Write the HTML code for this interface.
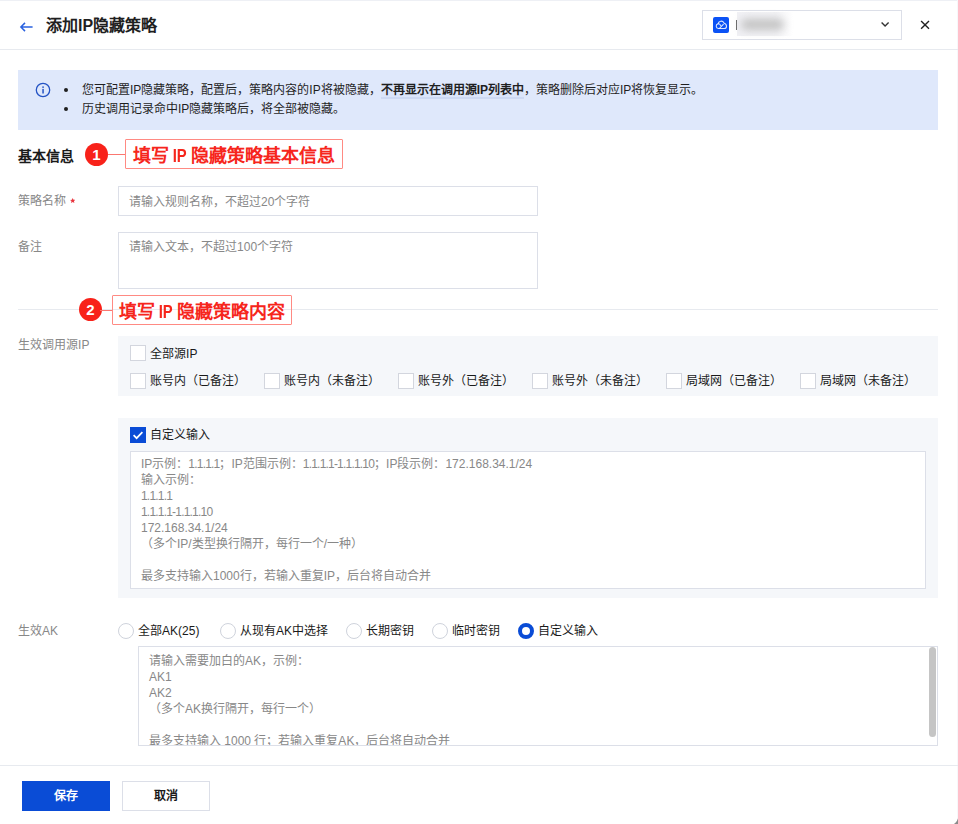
<!DOCTYPE html>
<html lang="zh-CN">
<head>
<meta charset="utf-8">
<title>添加IP隐藏策略</title>
<style>
*{box-sizing:border-box;margin:0;padding:0}
html,body{width:958px;height:824px;overflow:hidden;background:#fff}
body{font-family:"Liberation Sans",sans-serif;font-size:12px;line-height:16px;color:#1a1a1a;position:relative}
.abs{position:absolute;white-space:nowrap}
.j{white-space:nowrap;text-align:justify;text-align-last:justify}
.ln{display:block;height:16px}
.topline{left:0;top:0;width:958px;height:1px;background:#eef0f5}
.rightline{left:957px;top:0;width:1px;height:824px;background:#f7f7fa}
.hline{height:1px;background:#e7eaef}
.title{left:46px;top:14px;font-size:16px;line-height:24px;font-weight:bold;color:#1f1f1f}
.select{left:702px;top:10px;width:200px;height:30px;border:1px solid #dcdfe8;background:#fff}
.info{left:18px;top:70px;width:920px;height:60px;background:#dfe8fb}
.info .t{left:64px;font-size:12px;line-height:18px;color:#1f1f1f}
.dot{width:4px;height:4px;border-radius:50%;background:#1f1f1f}
.h3{left:18px;top:148px;font-size:14px;line-height:16px;font-weight:bold;color:#1a1a1a}
.badge{width:23px;height:23px;border-radius:50%;background:#f8221a;color:#fff;font-weight:bold;font-size:15px;line-height:23px;text-align:center}
.anno{border:1px solid #ff8a83;border-radius:1px;color:#f6261c;font-weight:bold;font-size:18px;line-height:32px;height:30px;padding-left:6px;overflow:hidden}
.anno i{font-style:normal;display:inline-block;font-size:18.5px;transform:scaleX(.8);margin:0 2px;line-height:20px;vertical-align:baseline}
.rline{height:1px;background:#fb7770}
.label{left:18px;color:#888;font-size:12px;line-height:16px}
.input{left:118px;width:420px;border:1px solid #dcdfe8;background:#fff;color:#888;padding:6px 10px;line-height:16px}
.panel{left:118px;width:820px;background:#f5f7fa}
.cb{width:16px;height:16px;border:1px solid #d3d6de;background:#fff}
.cbl{color:#1a1a1a;font-size:12px;line-height:16px}
.cbon{width:16px;height:16px;background:#0a4cd6}
.ta{border:1px solid #dcdfe8;background:#fff;color:#888;font-size:12px;line-height:16px;overflow:hidden}
.ta u{text-decoration:none;letter-spacing:-.8px}
.radio{width:16px;height:16px;border-radius:50%;border:1px solid #cfd3dc;background:#fff}
.radio.on{border:4px solid #0a4cd6}
.btn{top:781px;height:30px;line-height:28px;text-align:center;font-size:12px;font-weight:bold}
.btn.p{left:22px;width:88px;background:#0a4cd6;color:#fff;line-height:30px}
.btn.w{left:122px;width:88px;border:1px solid #dcdfe8;color:#1a1a1a;background:#fff}
</style>
</head>
<body>
<div class="abs topline"></div>
<div class="abs rightline"></div>

<!-- header -->
<svg class="abs" style="left:19px;top:20px" width="15" height="14" viewBox="0 0 15 14"><path d="M13.6 7H2M6 2.9L1.9 7l4.1 4.1" fill="none" stroke="#2a62e0" stroke-width="1.5"/></svg>
<div class="abs title j" style="width:111.2px">添加IP隐藏策略</div>
<div class="abs select">
  <svg class="abs" style="left:10px;top:6px" width="16" height="16" viewBox="0 0 16 16"><rect width="16" height="16" rx="2" fill="#0b52f5"/><g fill="none" stroke="#fff" stroke-opacity=".86" stroke-width="1.05" stroke-linecap="round" stroke-linejoin="round"><path d="M5.4 11.5A2.35 2.35 0 0 1 5.1 6.85A3.05 3.05 0 0 1 10.9 5.9C12.6 6.5 13.6 7.8 13.5 9.4A2.2 2.2 0 0 1 11.3 11.5z"/><path d="M6.7 11.2L10.3 7.3M5.1 6.85C6.3 6.9 7.2 7.5 7.7 8.5"/></g></svg>
  <div class="abs" style="left:32.5px;top:9px;width:1.5px;height:10px;background:#666;filter:blur(.5px)"></div>
  <div class="abs" style="left:34px;top:1px;width:56px;height:24px;background:linear-gradient(90deg,#f1f1f5 0,#f3f3f6 70%,#fff 100%)"></div>
  <div class="abs" style="left:38px;top:8px;width:43px;height:11px;background:#c2c2c2;filter:blur(4px);border-radius:6px"></div>
  <svg class="abs" style="left:177px;top:10px" width="12" height="8" viewBox="0 0 12 8"><path d="M1.6 1.6L5.1 5.1L8.6 1.6" fill="none" stroke="#333" stroke-width="1.4"/></svg>
</div>
<svg class="abs" style="left:919px;top:19px" width="12" height="12" viewBox="0 0 12 12"><path d="M2.1 1.9L10 9.8M10 1.9L2.1 9.8" fill="none" stroke="#222" stroke-width="1.4"/></svg>
<div class="abs hline" style="left:0;top:49px;width:958px"></div>

<!-- info alert -->
<div class="abs info">
  <svg class="abs" style="left:17px;top:12px" width="16" height="16" viewBox="0 0 16 16"><circle cx="8" cy="8" r="6.7" fill="none" stroke="#2453c4" stroke-width="1.3"/><rect x="7.3" y="6.9" width="1.5" height="4.6" fill="#2453c4"/><rect x="7.3" y="4.4" width="1.5" height="1.5" fill="#2453c4"/></svg>
  <div class="abs dot" style="left:46px;top:18px"></div>
  <div class="abs dot" style="left:46px;top:37px"></div>
  <div class="abs t j" style="top:11px;width:621.4px">您可配置IP隐藏策略，配置后，策略内容的IP将被隐藏，<b style="border-bottom:2px solid #cdd9f3;background:#dbe5fa">不再显示在调用源IP列表中</b>，策略删除后对应IP将恢复显示。</div>
  <div class="abs t j" style="top:30px;width:263.4px">历史调用记录命中IP隐藏策略后，将全部被隐藏。</div>
</div>

<!-- section 1 -->
<div class="abs h3 j" style="width:56px">基本信息</div>
<div class="abs badge" style="left:85px;top:143px">1</div>
<div class="abs rline" style="left:108px;top:154px;width:18px"></div>
<div class="abs anno" style="left:125px;top:139px;width:218px;padding-left:7px"><div class="j" style="width:201.5px">填写<i>IP</i>隐藏策略基本信息</div></div>

<div class="abs label j" style="top:193px;width:48px">策略名称</div>
<svg class="abs" style="left:70px;top:197.5px" width="5.4" height="5.4" viewBox="-1 -1 2 2"><path d="M0-1L.3-.35 1-.3 .45.15 .62.85 0 .48-.62.85-.45.15-1-.3-.3-.35z" fill="#e8353e"/></svg>
<div class="abs input" style="top:186px;height:30px;padding-top:7px"><div class="j" style="width:181.4px">请输入规则名称，不超过20个字符</div></div>
<div class="abs label j" style="top:239px;width:24.1px">备注</div>
<div class="abs input" style="top:232px;height:57px"><div class="j" style="width:164.1px">请输入文本，不超过100个字符</div></div>

<!-- divider + section 2 annotation -->
<div class="abs hline" style="left:18px;top:309px;width:920px"></div>
<div class="abs badge" style="left:79px;top:298px">2</div>
<div class="abs rline" style="left:100px;top:310px;width:12px"></div>
<div class="abs anno" style="left:112px;top:295px;width:180px"><div class="j" style="width:165.5px">填写<i>IP</i>隐藏策略内容</div></div>

<div class="abs label j" style="top:337px;width:71.4px">生效调用源IP</div>
<div class="abs panel" style="top:336px;height:60px">
  <div class="abs cb" style="left:12px;top:9px"></div><div class="abs cbl j" style="left:32px;top:10px;width:47.4px">全部源IP</div>
  <div class="abs cb" style="left:12px;top:37px"></div><div class="abs cbl j" style="left:32px;top:37px;width:96px">账号内（已备注）</div>
  <div class="abs cb" style="left:146px;top:37px"></div><div class="abs cbl j" style="left:166px;top:37px;width:96px">账号内（未备注）</div>
  <div class="abs cb" style="left:280px;top:37px"></div><div class="abs cbl j" style="left:300px;top:37px;width:96px">账号外（已备注）</div>
  <div class="abs cb" style="left:414px;top:37px"></div><div class="abs cbl j" style="left:434px;top:37px;width:96px">账号外（未备注）</div>
  <div class="abs cb" style="left:548px;top:37px"></div><div class="abs cbl j" style="left:568px;top:37px;width:96px">局域网（已备注）</div>
  <div class="abs cb" style="left:682px;top:37px"></div><div class="abs cbl j" style="left:702px;top:37px;width:96px">局域网（未备注）</div>
</div>

<div class="abs panel" style="top:418px;height:180px">
  <div class="abs cbon" style="left:12px;top:9px"><svg width="16" height="16" viewBox="0 0 16 16" style="display:block"><path d="M3.6 8.2l3 3 5.8-6" fill="none" stroke="#fff" stroke-width="1.7"/></svg></div>
  <div class="abs cbl j" style="left:32px;top:9px;width:60px">自定义输入</div>
  <div class="abs ta" style="left:12px;top:33px;width:796px;height:138px;padding:4px 10px">
    <div class="ln j" style="width:391.2px">IP示例：<u>1.1.1.1</u>；IP范围示例：<u>1.1.1.1-1.1.1.10</u>；IP段示例：172.168.34.1/24</div>
    <div class="ln j" style="width:60px">输入示例：</div>
    <div class="ln j" style="width:31.2px"><u>1.1.1.1</u></div>
    <div class="ln j" style="width:71.3px"><u>1.1.1.1-1.1.1.10</u></div>
    <div class="ln j" style="width:86.8px">172.168.34.1/24</div>
    <div class="ln j" style="width:222.1px">（多个IP/类型换行隔开，每行一个/一种）</div>
    <div class="ln"></div>
    <div class="ln j" style="width:290.1px">最多支持输入1000行，若输入重复IP，后台将自动合并</div>
  </div>
</div>

<!-- AK -->
<div class="abs label j" style="top:623px;width:40.1px">生效AK</div>
<div class="abs radio" style="left:118px;top:623px"></div><div class="abs cbl j" style="left:138px;top:623px;width:61.4px">全部AK(25)</div>
<div class="abs radio" style="left:220px;top:623px"></div><div class="abs cbl j" style="left:240px;top:623px;width:88.1px">从现有AK中选择</div>
<div class="abs radio" style="left:346px;top:623px"></div><div class="abs cbl j" style="left:366px;top:623px;width:48px">长期密钥</div>
<div class="abs radio" style="left:432px;top:623px"></div><div class="abs cbl j" style="left:452px;top:623px;width:48px">临时密钥</div>
<div class="abs radio on" style="left:518px;top:623px"></div><div class="abs cbl j" style="left:538px;top:623px;width:60px">自定义输入</div>

<div class="abs ta" style="left:138px;top:646px;width:800px;height:100px;padding:6px 10px">
  <div class="ln j" style="width:160.1px">请输入需要加白的AK，示例：</div>
  <div class="ln j" style="width:22.7px">AK1</div>
  <div class="ln j" style="width:22.7px">AK2</div>
  <div class="ln j" style="width:172.1px">（多个AK换行隔开，每行一个）</div>
  <div class="ln"></div>
  <div class="ln j" style="width:301.4px">最多支持输入 1000 行；若输入重复AK，后台将自动合并</div>
</div>
<div class="abs" style="left:929px;top:647px;width:7px;height:90px;border-radius:4px;background:#c5c5c5"></div>

<!-- footer -->
<div class="abs hline" style="left:0;top:765px;width:958px"></div>
<div class="abs btn p"><span class="j" style="display:inline-block;width:24.1px">保存</span></div>
<div class="abs btn w"><span class="j" style="display:inline-block;width:24.1px">取消</span></div>

<!-- window corner -->
<svg class="abs" style="left:945px;top:811px;filter:blur(.7px)" width="14" height="14" viewBox="945 811 14 14"><path d="M958.5 814.6A12.05 12.05 0 0 1 952.7 825H959V814.6z" fill="#8c8c8c"/></svg>
</body>
</html>
